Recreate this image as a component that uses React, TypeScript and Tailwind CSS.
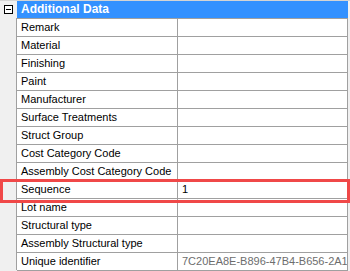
import React from "react";

const rows: { label: string; value?: string; muted?: boolean }[] = [
  { label: "Remark" },
  { label: "Material" },
  { label: "Finishing" },
  { label: "Paint" },
  { label: "Manufacturer" },
  { label: "Surface Treatments" },
  { label: "Struct Group" },
  { label: "Cost Category Code" },
  { label: "Assembly Cost Category Code" },
  { label: "Sequence", value: "1" },
  { label: "Lot name" },
  { label: "Structural type" },
  { label: "Assembly Structural type" },
  { label: "Unique identifier", value: "7C20EA8E-B896-47B4-B656-2A1454F0C2E1", muted: true },
];

export default function App() {
  return (
    <div
      className="relative w-[350px] h-[271px] overflow-hidden bg-[#f0f0f0] text-[11px] text-black"
      style={{ fontFamily: "'Liberation Sans', Arial, sans-serif" }}
    >
      <div className="h-px bg-[#d4d4d4]" />
      {/* header */}
      <div className="flex h-[17px]">
        <div className="w-[17px] flex items-center justify-center">
          <div className="w-[9px] h-[9px] border border-black bg-white flex items-center justify-center">
            <div className="w-[5px] h-px bg-black" />
          </div>
        </div>
        <div className="w-[331px] bg-[#3391ff] text-white font-bold pl-[4px] leading-[17px] text-[12px]">
          Additional Data
        </div>
        <div className="w-[2px]" />
      </div>

      {rows.map((r) => (
        <div key={r.label} className="flex h-[18px]">
          <div className="w-[17px] border-r border-[#a0a0a0]" />
          <div className="w-[161px] bg-white border-t border-r border-[#a0a0a0] pl-[4px] leading-[17px] whitespace-nowrap overflow-hidden">
            {r.label}
          </div>
          <div
            className={`w-[170px] bg-white border-t border-r border-[#a0a0a0] pl-[4px] leading-[17px] whitespace-nowrap overflow-hidden ${
              r.muted ? "text-[#6d6d6d]" : ""
            }`}
          >
            {r.value}
          </div>
        </div>
      ))}
      <div className="flex h-px">
        <div className="w-[17px]" />
        <div className="w-[331px] bg-[#a0a0a0]" />
      </div>

      {/* highlight */}
      <div className="absolute left-0 top-[179px] w-[350px] h-[24px] border-[3px] border-[#f04848] pointer-events-none" />
    </div>
  );
}
